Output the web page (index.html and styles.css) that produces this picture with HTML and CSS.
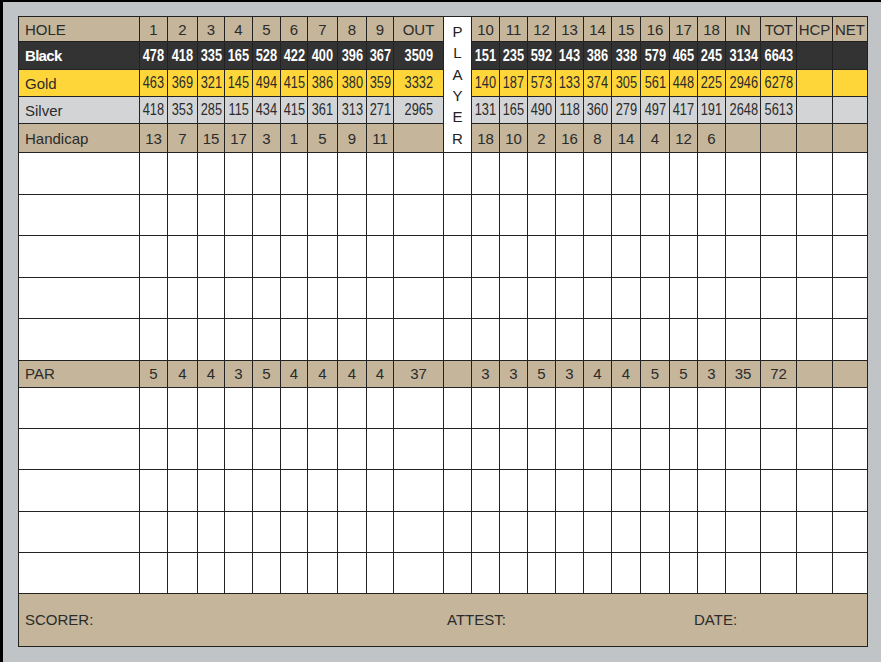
FILE: index.html
```html
<!DOCTYPE html>
<html>
<head>
<meta charset="utf-8">
<title>Scorecard</title>
<link rel="stylesheet" href="styles.css">
</head>
<body>
<div class="frame">
<table class="card">
<colgroup>
<col class="w121"><col class="w28"><col class="w30"><col class="w27"><col class="w28"><col class="w28"><col class="w27"><col class="w30"><col class="w29"><col class="w27"><col class="w50">
<col class="w28">
<col class="w28"><col class="w28"><col class="w28"><col class="w28"><col class="w28"><col class="w29"><col class="w29"><col class="w28"><col class="w28"><col class="w35"><col class="w36"><col class="w36"><col class="w35">
</colgroup>
<tbody>
<tr class="r-hole tan">
<th class="label">HOLE</th><td>1</td><td>2</td><td>3</td><td>4</td><td>5</td><td>6</td><td>7</td><td>8</td><td>9</td><td>OUT</td>
<td class="player" rowspan="5"><span class="pl">P</span><span class="pl">L</span><span class="pl">A</span><span class="pl">Y</span><span class="pl">E</span><span class="pl">R</span></td>
<td>10</td><td>11</td><td>12</td><td>13</td><td>14</td><td>15</td><td>16</td><td>17</td><td>18</td><td>IN</td><td class="tight">TOT</td><td>HCP</td><td>NET</td>
</tr>
<tr class="r-black black">
<th class="label">Black</th><td><span class="yd">478</span></td><td><span class="yd">418</span></td><td><span class="yd">335</span></td><td><span class="yd">165</span></td><td><span class="yd">528</span></td><td><span class="yd">422</span></td><td><span class="yd">400</span></td><td><span class="yd">396</span></td><td><span class="yd">367</span></td><td><span class="yd">3509</span></td>
<td><span class="yd">151</span></td><td><span class="yd">235</span></td><td><span class="yd">592</span></td><td><span class="yd">143</span></td><td><span class="yd">386</span></td><td><span class="yd">338</span></td><td><span class="yd">579</span></td><td><span class="yd">465</span></td><td><span class="yd">245</span></td><td><span class="yd">3134</span></td><td><span class="yd">6643</span></td><td></td><td></td>
</tr>
<tr class="r-tee gold">
<th class="label">Gold</th><td><span class="yd">463</span></td><td><span class="yd">369</span></td><td><span class="yd">321</span></td><td><span class="yd">145</span></td><td><span class="yd">494</span></td><td><span class="yd">415</span></td><td><span class="yd">386</span></td><td><span class="yd">380</span></td><td><span class="yd">359</span></td><td><span class="yd">3332</span></td>
<td><span class="yd">140</span></td><td><span class="yd">187</span></td><td><span class="yd">573</span></td><td><span class="yd">133</span></td><td><span class="yd">374</span></td><td><span class="yd">305</span></td><td><span class="yd">561</span></td><td><span class="yd">448</span></td><td><span class="yd">225</span></td><td><span class="yd">2946</span></td><td><span class="yd">6278</span></td><td></td><td></td>
</tr>
<tr class="r-tee silver">
<th class="label">Silver</th><td><span class="yd">418</span></td><td><span class="yd">353</span></td><td><span class="yd">285</span></td><td><span class="yd">115</span></td><td><span class="yd">434</span></td><td><span class="yd">415</span></td><td><span class="yd">361</span></td><td><span class="yd">313</span></td><td><span class="yd">271</span></td><td><span class="yd">2965</span></td>
<td><span class="yd">131</span></td><td><span class="yd">165</span></td><td><span class="yd">490</span></td><td><span class="yd">118</span></td><td><span class="yd">360</span></td><td><span class="yd">279</span></td><td><span class="yd">497</span></td><td><span class="yd">417</span></td><td><span class="yd">191</span></td><td><span class="yd">2648</span></td><td><span class="yd">5613</span></td><td></td><td></td>
</tr>
<tr class="r-hcp tan">
<th class="label">Handicap</th><td>13</td><td>7</td><td>15</td><td>17</td><td>3</td><td>1</td><td>5</td><td>9</td><td>11</td><td></td>
<td>18</td><td>10</td><td>2</td><td>16</td><td>8</td><td>14</td><td>4</td><td>12</td><td>6</td><td></td><td></td><td></td><td></td>
</tr>
<tr class="r-blank"><th class="label"></th><td></td><td></td><td></td><td></td><td></td><td></td><td></td><td></td><td></td><td></td><td></td><td></td><td></td><td></td><td></td><td></td><td></td><td></td><td></td><td></td><td></td><td></td><td></td><td></td></tr>
<tr class="r-blank"><th class="label"></th><td></td><td></td><td></td><td></td><td></td><td></td><td></td><td></td><td></td><td></td><td></td><td></td><td></td><td></td><td></td><td></td><td></td><td></td><td></td><td></td><td></td><td></td><td></td><td></td></tr>
<tr class="r-blank"><th class="label"></th><td></td><td></td><td></td><td></td><td></td><td></td><td></td><td></td><td></td><td></td><td></td><td></td><td></td><td></td><td></td><td></td><td></td><td></td><td></td><td></td><td></td><td></td><td></td><td></td></tr>
<tr class="r-blank"><th class="label"></th><td></td><td></td><td></td><td></td><td></td><td></td><td></td><td></td><td></td><td></td><td></td><td></td><td></td><td></td><td></td><td></td><td></td><td></td><td></td><td></td><td></td><td></td><td></td><td></td></tr>
<tr class="r-blank"><th class="label"></th><td></td><td></td><td></td><td></td><td></td><td></td><td></td><td></td><td></td><td></td><td></td><td></td><td></td><td></td><td></td><td></td><td></td><td></td><td></td><td></td><td></td><td></td><td></td><td></td></tr>
<tr class="r-par tan">
<th class="label">PAR</th><td>5</td><td>4</td><td>4</td><td>3</td><td>5</td><td>4</td><td>4</td><td>4</td><td>4</td><td>37</td><td></td>
<td>3</td><td>3</td><td>5</td><td>3</td><td>4</td><td>4</td><td>5</td><td>5</td><td>3</td><td>35</td><td>72</td><td></td><td></td>
</tr>
<tr class="r-blank2"><th class="label"></th><td></td><td></td><td></td><td></td><td></td><td></td><td></td><td></td><td></td><td></td><td></td><td></td><td></td><td></td><td></td><td></td><td></td><td></td><td></td><td></td><td></td><td></td><td></td><td></td></tr>
<tr class="r-blank2"><th class="label"></th><td></td><td></td><td></td><td></td><td></td><td></td><td></td><td></td><td></td><td></td><td></td><td></td><td></td><td></td><td></td><td></td><td></td><td></td><td></td><td></td><td></td><td></td><td></td><td></td></tr>
<tr class="r-blank2"><th class="label"></th><td></td><td></td><td></td><td></td><td></td><td></td><td></td><td></td><td></td><td></td><td></td><td></td><td></td><td></td><td></td><td></td><td></td><td></td><td></td><td></td><td></td><td></td><td></td><td></td></tr>
<tr class="r-blank2"><th class="label"></th><td></td><td></td><td></td><td></td><td></td><td></td><td></td><td></td><td></td><td></td><td></td><td></td><td></td><td></td><td></td><td></td><td></td><td></td><td></td><td></td><td></td><td></td><td></td><td></td></tr>
<tr class="r-blank2"><th class="label"></th><td></td><td></td><td></td><td></td><td></td><td></td><td></td><td></td><td></td><td></td><td></td><td></td><td></td><td></td><td></td><td></td><td></td><td></td><td></td><td></td><td></td><td></td><td></td><td></td></tr>
<tr class="r-foot tan">
<td class="foot" colspan="25"><div class="foot-row"><span class="f-scorer">SCORER:</span><span class="f-attest">ATTEST:</span><span class="f-date">DATE:</span></div></td>
</tr>
</tbody>
</table>
</div>
</body>
</html>
```

FILE: styles.css
```css
html, body {
  margin: 0;
  padding: 0;
}
body {
  background: #c1c4c7;
  font-family: "Liberation Sans", Arial, sans-serif;
}
.frame {
  height: 662px;
  box-sizing: border-box;
  border-top: 2px solid #000;
  border-left: 3px solid #000;
  padding: 14px 0 0 15px;
}
.card {
  border-collapse: collapse;
  table-layout: fixed;
  width: 850px;
  font-size: 15px;
  color: #2b2b2b;
  background: #fff;
}
.card td, .card th {
  border: 1px solid #222;
  padding: 0;
  text-align: center;
  font-weight: normal;
  white-space: nowrap;
  overflow: hidden;
}
.card .label {
  text-align: left;
  padding-left: 6px;
}
.w121 { width: 121px; }
.w27 { width: 27px; }
.w28 { width: 28px; }
.w29 { width: 29px; }
.w30 { width: 30px; }
.w35 { width: 35px; }
.w36 { width: 36px; }
.w50 { width: 50px; }

.r-hole { height: 25px; }
.r-black { height: 28px; }
.r-tee { height: 27px; }
.r-hcp { height: 29px; }
.r-blank { height: 41.6px; }
.r-par { height: 27px; }
.r-blank2 { height: 41.2px; }
.r-foot { height: 53px; }

.tan td, .tan th { background: #c4b59b; }
.black td, .black th { background: #333333; color: #fff; }
.black th { font-weight: bold; letter-spacing: -0.7px; }
.black .yd { font-weight: bold; }
.gold td, .gold th { background: #fed63a; }
.silver td, .silver th { background: #d3d4d6; }

.card td.player {
  background: #fff;
  color: #222;
  vertical-align: middle;
  padding-top: 1px;
}
.pl {
  display: block;
  line-height: 21.3px;
}
.yd {
  display: inline-block;
  font-size: 16px;
  transform: scaleX(0.8);
}
.tight { letter-spacing: -0.8px; }

.card td.foot {
  text-align: left;
  padding-left: 6px;
}
.foot-row {
  display: flex;
  align-items: center;
}
.f-scorer { width: 422px; }
.f-attest { width: 247px; }
```
